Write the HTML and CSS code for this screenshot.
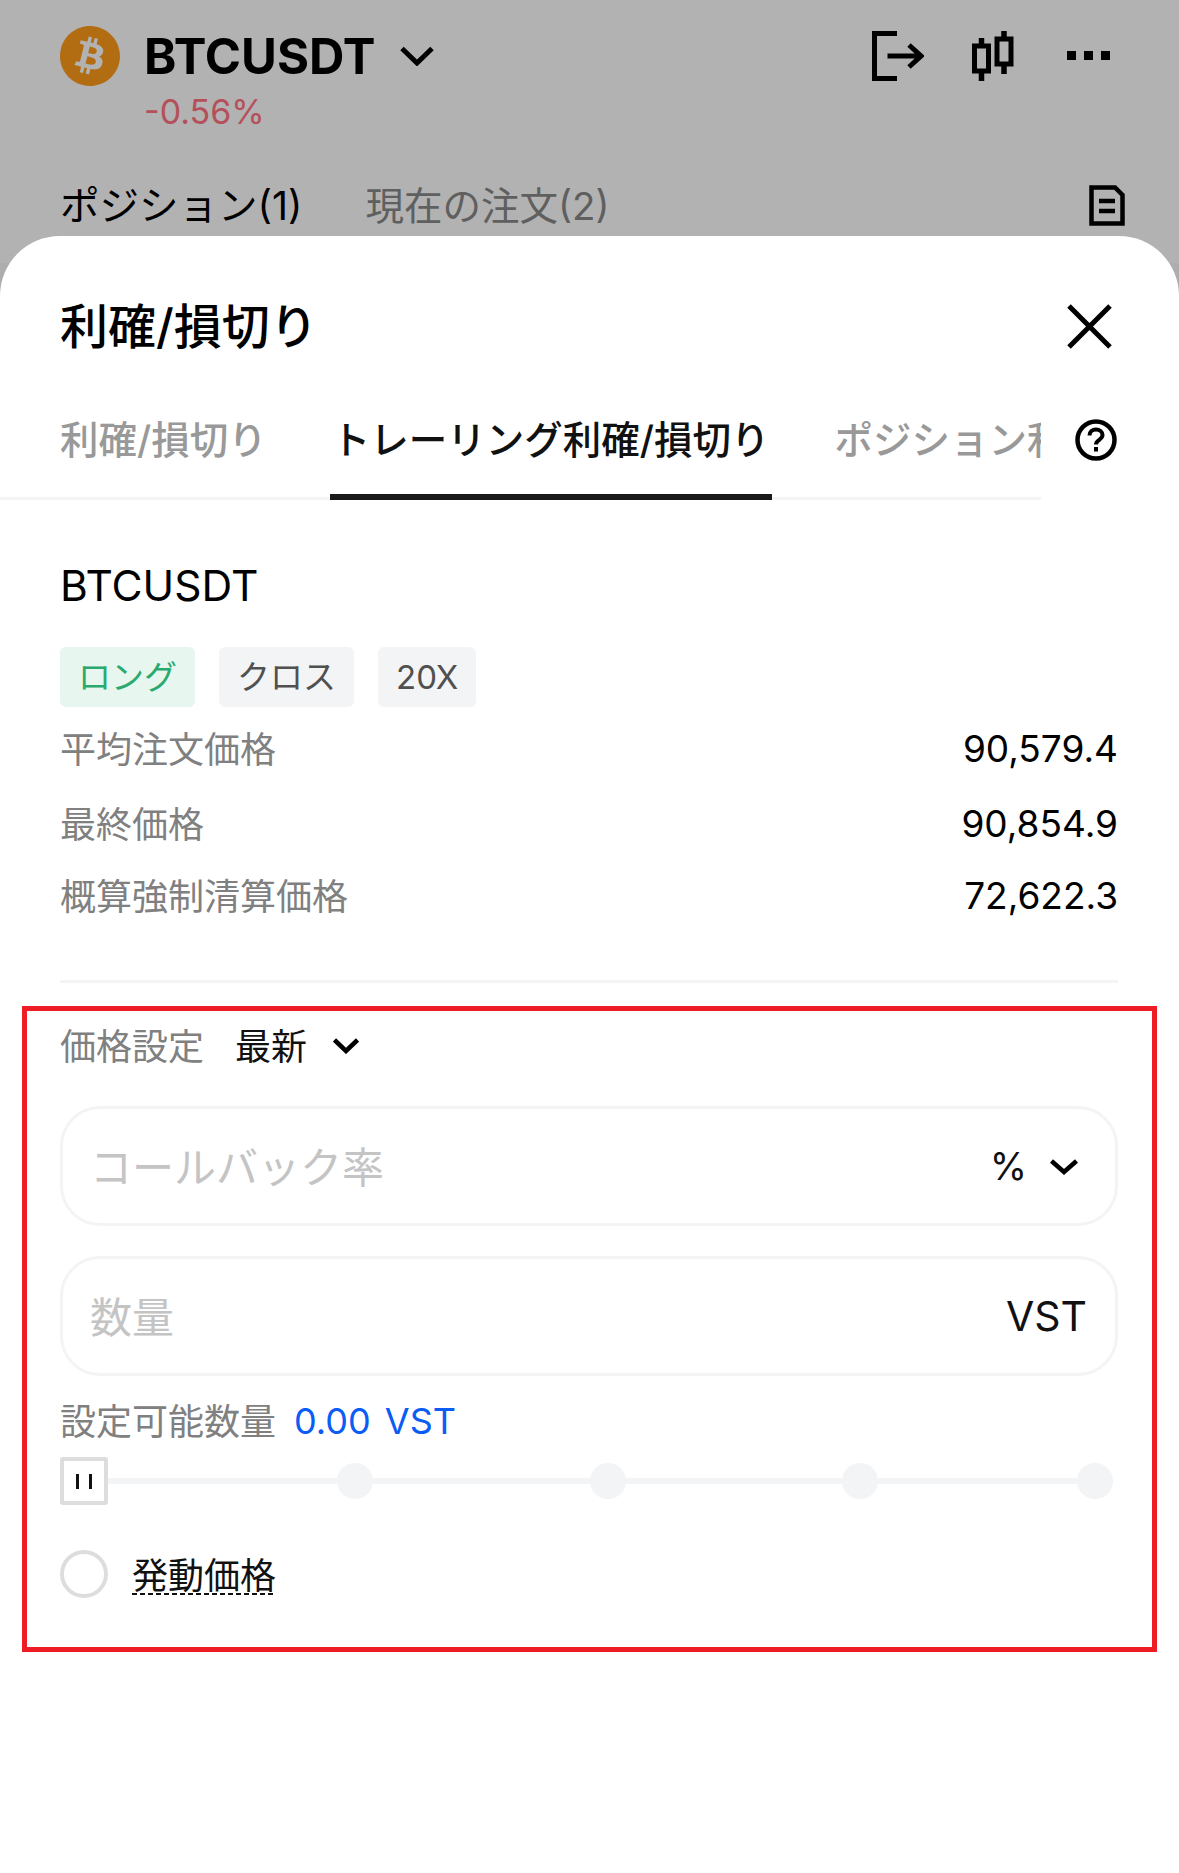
FILE: index.html
```html
<!DOCTYPE html>
<html lang="ja">
<head>
<meta charset="utf-8">
<title>利確/損切り</title>
<link rel="stylesheet" href="styles.css">
</head>
<body>
<div class="backdrop">
  <header class="topbar">
    <svg class="coin" viewBox="0 0 24 24"><path fill="#b26c12" d="M23.638 14.904c-1.602 6.43-8.113 10.34-14.542 8.736C2.67 22.05-1.244 15.525.362 9.105 1.962 2.67 8.475-1.243 14.9.358c6.43 1.605 10.342 8.115 8.738 14.548v-.002zm-6.35-4.613c.24-1.59-.974-2.45-2.64-3.03l.54-2.153-1.315-.33-.525 2.107c-.345-.087-.705-.167-1.064-.25l.526-2.127-1.32-.33-.54 2.165c-.285-.067-.565-.132-.84-.2l-1.815-.45-.35 1.407s.975.225.955.236c.535.136.63.486.615.766l-1.477 5.92c-.075.166-.24.406-.614.314.015.02-.96-.24-.96-.24l-.66 1.51 1.71.426.93.242-.54 2.19 1.32.327.54-2.17c.36.1.705.19 1.05.273l-.51 2.154 1.32.33.545-2.19c2.24.427 3.93.257 4.64-1.774.57-1.637-.03-2.58-1.217-3.196.854-.193 1.5-.76 1.68-1.93h.01zm-3.01 4.22c-.404 1.64-3.157.75-4.05.53l.72-2.9c.896.23 3.757.67 3.33 2.37zm.41-4.24c-.37 1.49-2.662.735-3.405.55l.654-2.64c.744.18 3.137.524 2.75 2.084v.006z"/></svg>
    <div class="symbol">
      <div class="symbol-row">
        <span class="symbol-name">BTCUSDT</span>
        <svg class="chev-lg" viewBox="0 0 34 20"><path d="M2 2.500 17 17 32 2.500" fill="none" stroke="#000" stroke-width="5"/></svg>
      </div>
      <div class="change">-0.56%</div>
    </div>
    <div class="top-icons">
      <svg class="ic-exit" viewBox="0 0 52 50"><path d="M25 2.500H2.500V47.500H25" fill="none" stroke="#000" stroke-width="5"/><path d="M15.500 25H49M37 14 49 25 37 36" fill="none" stroke="#000" stroke-width="5"/></svg>
      <svg class="ic-candle" viewBox="0 0 42 50"><path d="M9.500 7V50M32 0V43" stroke="#000" stroke-width="5.500" fill="none"/><rect x="2.500" y="15" width="14" height="25" fill="#b2b2b2" stroke="#000" stroke-width="5"/><rect x="25" y="8" width="14" height="25" fill="#b2b2b2" stroke="#000" stroke-width="5"/></svg>
      <div class="dots"><i></i><i></i><i></i></div>
    </div>
  </header>
  <nav class="order-tabs">
    <span class="order-tab is-active">ポジション(1)</span>
    <span class="order-tab">現在の注文(2)</span>
    <svg class="ic-doc" viewBox="0 0 36 41"><path d="M2.500 2.500H26L33.500 10V38.500H2.500Z" fill="none" stroke="#000" stroke-width="4.500"/><path d="M10 16H26M10 26H26" stroke="#000" stroke-width="4.500"/></svg>
  </nav>
</div>

<main class="sheet">
  <div class="sheet-head">
    <h1 class="sheet-title">利確/損切り</h1>
    <svg class="ic-close" viewBox="0 0 45 45"><path d="M2 2 43 43M43 2 2 43" stroke="#000" stroke-width="5" fill="none"/></svg>
  </div>

  <div class="tabs-row">
    <div class="tabs">
      <span class="tab">利確/損切り</span>
      <span class="tab is-active">トレーリング利確/損切り</span>
      <span class="tab tab-clip">ポジション利確/損切り</span>
    </div>
    <svg class="ic-help" viewBox="0 0 42 42"><circle cx="21" cy="21" r="18.500" fill="none" stroke="#000" stroke-width="4.500"/><path d="M14.500 16.500c0-3.800 3-6 6.500-6s6.500 2.200 6.500 5.600c0 4.800-6.500 4.600-6.500 9.400" fill="none" stroke="#000" stroke-width="4"/><rect x="19" y="28" width="4" height="4.500"/></svg>
  </div>

  <section class="position">
    <div class="pos-name">BTCUSDT</div>
    <div class="tags">
      <span class="tag tag-long">ロング</span>
      <span class="tag">クロス</span>
      <span class="tag tag-lev">20X</span>
    </div>
    <div class="rows">
      <div class="row row-a"><span class="row-label">平均注文価格</span><span class="row-value">90,579.4</span></div>
      <div class="row row-b"><span class="row-label">最終価格</span><span class="row-value">90,854.9</span></div>
      <div class="row row-c"><span class="row-label">概算強制清算価格</span><span class="row-value">72,622.3</span></div>
    </div>
  </section>

  <section class="form">
    <div class="price-set">
      <span class="row-label">価格設定</span>
      <span class="price-type">最新</span>
      <svg class="chev-sm" viewBox="0 0 26 17"><path d="M1.500 3 13 14 24.500 3" fill="none" stroke="#000" stroke-width="4.500"/></svg>
    </div>
    <div class="field field-rate">
      <span class="placeholder">コールバック率</span>
      <span class="unit unit-pct">%</span>
      <svg class="chev-unit" viewBox="0 0 28 17"><path d="M1.500 3 14 14 26.500 3" fill="none" stroke="#000" stroke-width="4.500"/></svg>
    </div>
    <div class="field field-qty">
      <span class="placeholder">数量</span>
      <span class="unit">VST</span>
    </div>
    <div class="available">
      <span class="row-label">設定可能数量</span>
      <span class="avail-value">0.00 VST</span>
    </div>
    <div class="slider">
      <span class="thumb"><i></i><i></i></span>
      <span class="seg"></span><span class="stop"></span>
      <span class="seg"></span><span class="stop"></span>
      <span class="seg"></span><span class="stop"></span>
      <span class="seg"></span><span class="stop"></span>
    </div>
    <div class="trigger">
      <span class="radio"></span>
      <span class="trigger-label">発動価格</span>
    </div>
  </section>
</main>
</body>
</html>
```

FILE: styles.css
```css
* { box-sizing: border-box; }
html, body { margin: 0; padding: 0; }
body {
  width: 1179px;
  height: 1873px;
  overflow: hidden;
  background: #adadad;
  color: #000;
  font-family: Inter, "Noto Sans CJK JP", sans-serif;
}
svg { display: block; flex: none; }

.backdrop { height: 263px; background: #b2b2b2; overflow: hidden; }

.topbar { display: flex; align-items: flex-start; padding: 26px 69px 0 60px; height: 169px; }
.coin { width: 60px; height: 60px; }
.symbol { margin-left: 24px; }
.symbol-row { display: flex; align-items: center; height: 60px; }
.symbol-name { font-size: 49px; font-weight: 700; line-height: 62px; height: 60px; }
.chev-lg { width: 34px; height: 20px; margin-left: 24px; }
.change { font-size: 34px; line-height: 44px; color: #b5505a; margin-top: 4px; }
.top-icons { margin-left: auto; display: flex; align-items: flex-start; padding-top: 5px; }
.ic-exit { width: 52px; height: 50px; }
.ic-candle { width: 42px; height: 50px; margin-left: 48px; }
.dots { display: flex; gap: 8px; margin-left: 53px; margin-top: 20px; }
.dots i { width: 9px; height: 9px; background: #000; }

.order-tabs { display: flex; align-items: center; padding: 0 54px 0 60px; height: 68px; margin-top: 3px; }
.order-tab { font-size: 38.5px; color: #5f5f5f; margin-right: 63px; line-height: 68px; }
.order-tab.is-active { color: #000; font-size: 39.5px; }
.ic-doc { width: 36px; height: 41px; margin-left: auto; margin-top: -2px; }

.sheet {
  position: relative;
  margin-top: -27px;
  height: 1637px;
  background: #fff;
  border-radius: 60px 60px 0 0;
}
.sheet-head { display: flex; align-items: center; justify-content: space-between; height: 187px; padding: 0 67px 6px 60px; }
.sheet-title { margin: 0; font-size: 48px; font-weight: 500; line-height: 60px; }
.ic-close { width: 45px; height: 45px; }

.tabs-row { display: flex; align-items: flex-start; margin-top: -22px; height: 99px; }
.tabs { display: flex; width: 1041px; height: 99px; overflow: hidden; box-shadow: inset 0 -3px 0 #f3f4f6; padding-left: 60px; }
.tab { flex: none; font-size: 38.5px; font-weight: 500; color: #999; line-height: 78px; height: 99px; margin-right: 65px; white-space: nowrap; position: relative; }
.tab.is-active { color: #111; }
.tab.is-active::after { content: ""; position: absolute; left: -2px; right: -3px; bottom: 0; height: 6px; background: #1a1a1a; }
.ic-help { width: 42px; height: 42px; margin-left: 34px; margin-top: 18px; }

.position { padding: 0 61px 0 60px; }
.pos-name { font-size: 42.5px; line-height: 50px; margin-top: 61px; }
.tags { display: flex; gap: 24px; margin-top: 36px; }
.tag { height: 60px; line-height: 60px; padding: 0 18px; font-size: 33px; border-radius: 6px; background: #f3f4f6; color: #505050; }
.tag-long { background: #e7f6ef; color: #2aaa6e; }
.rows { border-bottom: 3px solid #f3f4f6; padding-bottom: 60px; }
.row { display: flex; justify-content: space-between; align-items: center; height: 50px; }
.row-a { margin-top: 16px; }
.row-b { margin-top: 25px; }
.row-c { margin-top: 22px; }
.row-label { font-size: 36px; color: #808080; }
.row .row-label { padding-bottom: 2px; }
.row-value { font-size: 37px; font-weight: 400; color: #000; }

.form {
  margin: 23px 22px 0;
  height: 646px;
  border: 5px solid #ee1c25;
  padding: 0 34px 0 33px;
}
.price-set { display: flex; align-items: center; height: 62px; margin-top: 2px; }
.price-type { font-size: 36px; color: #111; margin-left: 31px; }
.chev-sm { width: 26px; height: 17px; margin-left: 26px; margin-top: 2px; }

.field { display: flex; align-items: center; height: 120px; border: 3px solid #f3f4f6; border-radius: 40px; padding: 0 28px 0 27px; }
.field-rate { margin-top: 31px; padding-right: 37px; }
.field-qty { margin-top: 30px; }
.placeholder { font-size: 42px; color: #c4c4c4; padding-bottom: 4px; }
.unit { font-size: 41px; margin-left: auto; color: #111; }
.unit-pct { font-size: 38px; }
.chev-unit { width: 28px; height: 17px; margin-left: 23px; }

.available { display: flex; align-items: center; height: 50px; margin-top: 20px; }
.available .row-label { padding-bottom: 4px; }
.avail-value { font-size: 36px; color: #0b5cf5; margin-left: 18px; word-spacing: 4px; }

.slider { display: grid; grid-template-columns: 48px 229px 36px 217px 36px 216px 36px 199px 36px; align-items: center; margin-top: 11px; height: 48px; }
.thumb { width: 48px; height: 48px; border: 4px solid #ddd; border-radius: 3px; display: flex; align-items: center; justify-content: center; gap: 10px; }
.thumb i { width: 3px; height: 15px; background: #111; }
.seg { height: 6px; background: #f3f4f6; }
.stop { width: 36px; height: 36px; border-radius: 50%; background: #f3f4f6; }

.trigger { display: flex; align-items: center; margin-top: 45px; height: 48px; }
.radio { width: 48px; height: 48px; border: 4px solid #ddd; border-radius: 50%; }
.trigger-label {
  font-size: 36px;
  color: #111;
  margin-left: 24px;
  margin-top: 2px;
  height: 40px;
  line-height: 42px;
  background: repeating-linear-gradient(90deg, #111 0 5px, transparent 5px 8px) left bottom / 100% 2px no-repeat;
}
```
